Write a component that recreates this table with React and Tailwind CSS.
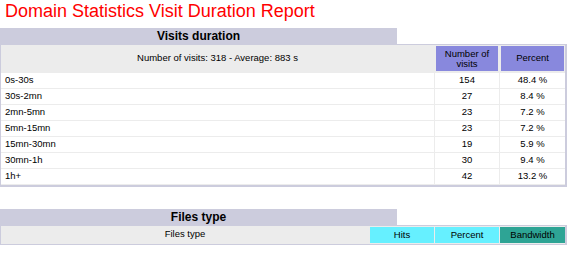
const ROWS = [
  ['0s-30s', '154', '48.4 %'],
  ['30s-2mn', '27', '8.4 %'],
  ['2mn-5mn', '23', '7.2 %'],
  ['5mn-15mn', '23', '7.2 %'],
  ['15mn-30mn', '19', '5.9 %'],
  ['30mn-1h', '30', '9.4 %'],
  ['1h+', '42', '13.2 %'],
];

const cell = 'border-r border-b border-[#ECECEC] flex items-center justify-center';

export default function App() {
  return (
    <div className="w-[570px] min-h-[261px] bg-white text-black font-['Liberation_Sans',Arial,Helvetica,sans-serif]">
      {/* title */}
      <div className="h-[28px] pl-[5px] pt-[1px] text-[18px] leading-[20px] text-[#FF0000]">
        Domain Statistics Visit Duration Report
      </div>

      {/* visits duration */}
      <div className="w-[567px]">
        <div className="w-[397px] h-[16px] bg-[#CCCCDD] flex items-center justify-center text-[12px] font-bold leading-[14px]">
          Visits duration
        </div>
        <div className="border border-b-2 border-r-2 border-[#CCCCDD] bg-white">
          <div className="grid grid-cols-[1fr_65px_65px] text-[9.5px]">
            <div className={`${cell} bg-[#ECECEC] h-[28px]`}>Number of visits: 318 - Average: 883 s</div>
            <div className={`${cell} bg-[#ECECEC] h-[28px] p-[1px]`}>
              <div className="w-full h-full bg-[#8888DD] flex items-center justify-center text-center leading-[10px]">
                Number of<br />visits
              </div>
            </div>
            <div className={`${cell} bg-[#ECECEC] h-[28px] p-[1px] border-r-0`}>
              <div className="w-full h-full bg-[#8888DD] flex items-center justify-center">Percent</div>
            </div>
            {ROWS.map(([label, n, pct]) => (
              <Row key={label} label={label} n={n} pct={pct} />
            ))}
          </div>
        </div>
      </div>

      {/* files type */}
      <div className="w-[567px] mt-[22px]">
        <div className="w-[397px] h-[16px] bg-[#CCCCDD] flex items-center justify-center text-[12px] font-bold leading-[14px]">
          Files type
        </div>
        <div className="border border-r-2 border-[#CCCCDD] bg-white">
          <div className="grid grid-cols-[1fr_65px_65px_65px] text-[9.5px] bg-[#ECECEC]">
            <div className={`${cell} h-[18px]`}>Files type</div>
            <div className={`${cell} h-[18px] pt-[1px]`}>
              <div className="w-full h-full bg-[#66F0FF] flex items-center justify-center">Hits</div>
            </div>
            <div className={`${cell} h-[18px] pt-[1px]`}>
              <div className="w-full h-full bg-[#66F0FF] flex items-center justify-center">Percent</div>
            </div>
            <div className={`${cell} h-[18px] pt-[1px] border-r-0`}>
              <div className="w-full h-full bg-[#2EA495] flex items-center justify-center">Bandwidth</div>
            </div>
          </div>
        </div>
      </div>
    </div>
  );
}

function Row({ label, n, pct }) {
  return (
    <>
      <div className="border-r border-b border-[#ECECEC] h-[16px] flex items-center pl-[4px]">{label}</div>
      <div className={`${cell} h-[16px]`}>{n}</div>
      <div className={`${cell} h-[16px] border-r-0`}>{pct}</div>
    </>
  );
}
